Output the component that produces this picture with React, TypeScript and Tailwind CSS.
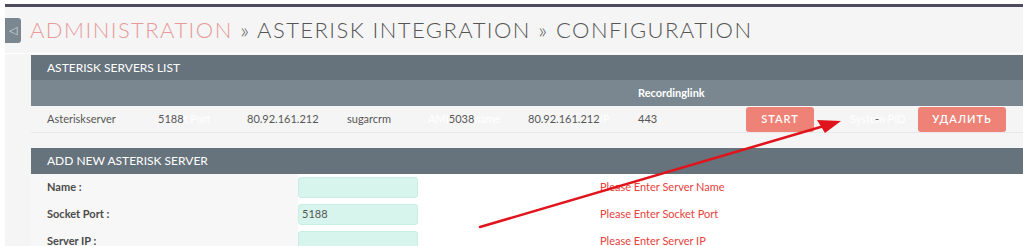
import React from 'react';

const font = { fontFamily: 'Lato, "Liberation Sans", sans-serif' };

const Hidden = ({ children }: { children: React.ReactNode }) => (
  <span className="text-white">{children}</span>
);

const FormRow = ({ label, value, error }: { label: string; value?: string; error: string }) => (
  <div className="flex h-[27px] items-center">
    <div className="w-[267px] self-stretch flex items-center pl-[16px] bg-[#f7f7f7] text-[11px] font-bold text-[#4a4a4a]">
      {label}
    </div>
    <div className="w-[302px] flex items-center">
      <div className="w-[120px] h-[21px] rounded-[3px] bg-[#d7f5ec] border border-[#c9eee2] flex items-center px-[3px] text-[11px] text-[#555]">
        {value}
      </div>
    </div>
    <div className="text-[11px] text-[#e8413b]">{error}</div>
  </div>
);

export default function App() {
  return (
    <div className="w-[1023px] h-[246px] overflow-hidden bg-white relative" style={font}>
      <div className="h-[4px]" />
      <div className="ml-[5px] h-[3px] bg-[#4d4b5c]" />
      <div className="ml-[5px] bg-[#f5f5f5] h-[239px]">
        {/* title */}
        <div className="flex h-[47px] border-b border-white">
          <div className="mt-[11px] w-[16px] h-[25px] bg-[#7b8790] rounded-r-[3px] flex items-center justify-center text-[#d9dee2] text-[11px]">
            ◁
          </div>
          <div className="ml-[9px] mt-[10px] text-[22px] leading-[26px] font-light tracking-[1.45px] text-[#555] whitespace-nowrap">
            <span className="text-[#e79a98]">ADMINISTRATION</span> » ASTERISK INTEGRATION » CONFIGURATION
          </div>
        </div>

        {/* servers list */}
        <div className="ml-[26px] mt-[1px]">
          <div className="h-[25px] bg-[#66727c] flex items-center pl-[16px] text-[12px] text-white">
            ASTERISK SERVERS LIST
          </div>
          <div className="h-[26px] bg-[#7b8790] flex items-center text-[11px] font-bold text-white">
            <div className="w-[607px]" />
            <div>Recordinglink</div>
          </div>
          <div className="h-[27px] bg-[#f5f5f5] border-b border-[#e8e8e8] flex items-center text-[11px] text-[#555] whitespace-nowrap">
            <div className="w-[127px] pl-[16px]">Asteriskserver</div>
            <div className="w-[89px]">5188<Hidden>t Port</Hidden></div>
            <div className="w-[100px]">80.92.161.212</div>
            <div className="w-[81px]">sugarcrm</div>
            <div className="w-[100px]"><Hidden>AMI</Hidden>5038<Hidden>name</Hidden></div>
            <div className="w-[110px]">80.92.161.212<Hidden>IP</Hidden></div>
            <div className="w-[108px]">443</div>
            <div className="w-[104px]">
              <div className="w-[68px] h-[25px] rounded-[3px] bg-[#ef8276] text-white font-semibold tracking-[1px] flex items-center justify-center">
                START
              </div>
            </div>
            <div className="w-[68px] relative">
              <Hidden>System PID</Hidden>
              <span className="absolute left-[25px] top-0 text-[#555]">-</span>
            </div>
            <div className="w-[88px] h-[25px] rounded-[3px] bg-[#ef8276] text-white font-semibold tracking-[1px] flex items-center justify-center">
              УДАЛИТЬ
            </div>
          </div>
        </div>

        {/* add new server */}
        <div className="ml-[26px] mt-[15px]">
          <div className="h-[26px] bg-[#66727c] flex items-center pl-[16px] text-[12px] text-white">
            ADD NEW ASTERISK SERVER
          </div>
          <div className="bg-white">
            <FormRow label="Name :" error="Please Enter Server Name" />
            <FormRow label="Socket Port :" value="5188" error="Please Enter Socket Port" />
            <FormRow label="Server IP :" error="Please Enter Server IP" />
          </div>
        </div>
      </div>

      {/* annotation arrow */}
      <svg className="absolute left-0 top-0 pointer-events-none" width="1023" height="246">
        <line x1="480" y1="227" x2="824" y2="126" stroke="#e0141c" strokeWidth="2.5" strokeLinecap="round" />
        <polygon points="841,121 817,120 825,133" fill="#e0141c" />
      </svg>
    </div>
  );
}
